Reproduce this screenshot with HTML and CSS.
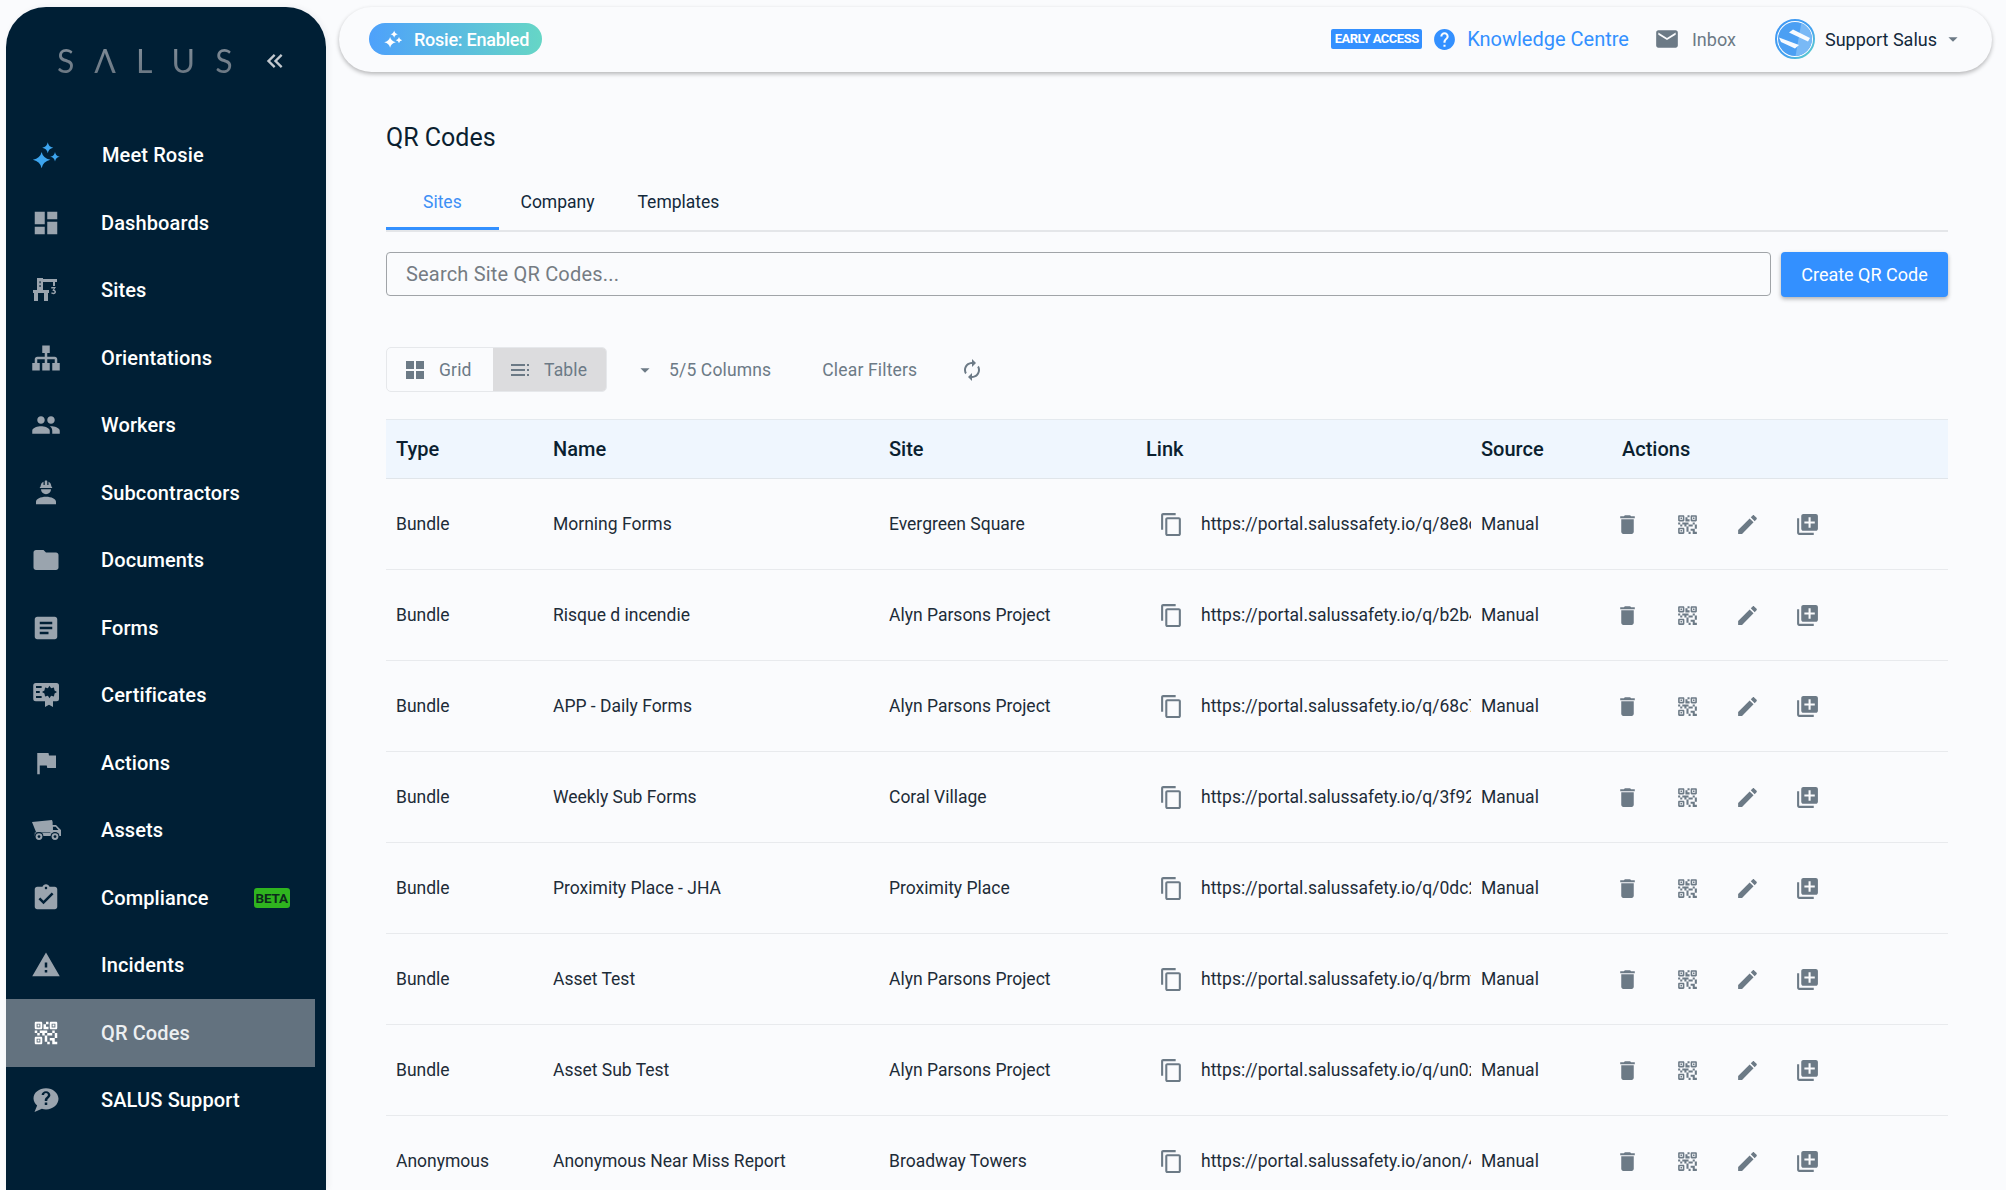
FILE: index.html
```html
<!DOCTYPE html>
<html lang="en">
<head>
    <meta charset="UTF-8">
    <meta name="viewport" content="width=device-width, initial-scale=1.0">
    <title>QR Codes</title>
    <link rel="stylesheet" href="styles.css">
</head>
<body>

    <!-- Icon sprite -->
    <svg class="sprite" xmlns="http://www.w3.org/2000/svg">
        <symbol id="i-spark" viewBox="0 0 24 24"><path d="M8.500 9.500q1 4.800 7 6.300-6 1.500-7 6.700-1-5.200-7-6.700 6-1.500 7-6.300zM13.400 1.800q.6 3.600 4.400 4.400-3.800.7-4.400 4.400-.6-3.700-4.400-4.400 3.800-.8 4.400-4.400zM19.200 9.600q.5 3.100 3.800 3.800-3.300.6-3.800 3.800-.5-3.200-3.800-3.800 3.300-.7 3.800-3.800z"/></symbol>
        <symbol id="i-dash" viewBox="0 0 24 24"><path d="M3 13h8V3H3v10zm0 8h8v-6H3v6zm10 0h8V11h-8v10zm0-18v6h8V3h-8z"/></symbol>
        <symbol id="i-crane" viewBox="0 0 24 24"><path fill-rule="evenodd" d="M4.800 2.400h4.800v.8h11.200v2.400h-1.600v3.200h-1.600V5.600h-8V12h4.800v2.400h-.8v6.400h-3.200v-6.400H5.600v6.400H2.400v-6.400h-.8V12h3.200V2.400zM6.800 5v1.500h.9V5h-.9zm0 3v1.500h.9V8h-.9z"/><path d="M16.200 9.600H20l-1.500 2.200c1 .3 1.500 1 1.500 1.800 0 1-.9 1.700-2 1.700-.9 0-1.600-.3-2-.9l.9-.7c.3.3.6.5 1.100.5.5 0 .8-.3.8-.6 0-.5-.5-.8-1.500-.8v-.8l1-1.300h-2.100z"/></symbol>
        <symbol id="i-sitemap" viewBox="0 0 24 24"><path d="M9 2v6h2v3H5c-1.110 0-2 .89-2 2v3H1v6h6v-6H5v-3h6v3H9v6h6v-6h-2v-3h6v3h-2v6h6v-6h-2v-3c0-1.110-.9-2-2-2h-6V8h2V2H9z"/></symbol>
        <symbol id="i-group" viewBox="0 0 24 24"><path d="M16 11c1.660 0 2.990-1.340 2.990-3S17.660 5 16 5c-1.660 0-3 1.340-3 3s1.340 3 3 3zm-8 0c1.660 0 2.990-1.340 2.990-3S9.660 5 8 5C6.340 5 5 6.340 5 8s1.340 3 3 3zm0 2c-2.330 0-7 1.170-7 3.500V19h14v-2.500c0-2.330-4.670-3.500-7-3.500zm8 0c-.29 0-.62.02-.97.05 1.160.84 1.970 1.970 1.970 3.450V19h6v-2.500c0-2.330-4.670-3.500-7-3.500z"/></symbol>
        <symbol id="i-hardhat" viewBox="0 0 24 24"><path d="M12 15c-4.420 0-8 1.790-8 4v2h16v-2c0-2.210-3.580-4-8-4M8 9a4 4 0 0 0 4 4 4 4 0 0 0 4-4M11.500 2c-.3 0-.5.21-.5.5v3h-1V3S7.750 3.860 7.750 6.750C7.750 6.750 7 6.890 7 8h10c-.05-1.110-.75-1.250-.75-1.250C16.250 3.860 14 3 14 3v2.500h-1v-3c0-.29-.19-.5-.5-.5h-1z"/></symbol>
        <symbol id="i-folder" viewBox="0 0 24 24"><path d="M10 4H4c-1.100 0-1.990.9-1.990 2L2 18c0 1.100.9 2 2 2h16c1.100 0 2-.9 2-2V8c0-1.100-.9-2-2-2h-8l-2-2z"/></symbol>
        <symbol id="i-article" viewBox="0 0 24 24"><path d="M19 3H5c-1.100 0-2 .9-2 2v14c0 1.100.9 2 2 2h14c1.100 0 2-.9 2-2V5c0-1.100-.9-2-2-2zm-5 14H7v-2h7v2zm3-4H7v-2h10v2zm0-4H7V7h10v2z"/></symbol>
        <symbol id="i-cert" viewBox="0 0 24 24"><path fill-rule="evenodd" d="M3.800 2.400h16.600a2 2 0 0 1 2 2V15a2 2 0 0 1-2 2h-2.800v4.600l-3.200-1.800-3.200 1.800V17H3.800a2 2 0 0 1-2-2V4.400a2 2 0 0 1 2-2zM14.800 4.600l1.260 1.950 2.280-.49.49 2.280 1.970 1.260-1.970 1.260-.49 2.280-2.280-.49-1.260 1.950-1.260-1.950-2.280.49-.49-2.280-1.970-1.260 1.970-1.260.49-2.280 2.280.49zM4 4.800v1.500h4.500V4.800H4zm0 4v1.500h3V8.800H4zm0 4v1.500h4.500v-1.500H4z"/></symbol>
        <symbol id="i-flag" viewBox="0 0 24 24"><path d="M14.400 6L14 4H5v17h2v-7h5.600l.4 2h7V6z"/></symbol>
        <symbol id="i-truck" viewBox="0 0 24 24">
            <path d="M.8 5.600L16.800 4l.5 1.600v8H4z"/>
            <path fill-rule="evenodd" d="M3 14h12.500V8H20l4 4v4.800H3V14zM17.500 9.300V12H22l-2.300-2.700h-2.200z"/>
            <circle cx="6.400" cy="17.200" r="3.600" fill="#001f35"/><circle cx="6.400" cy="17.200" r="2.700"/><circle cx="6.400" cy="17.200" r="1.100" fill="#001f35"/>
            <circle cx="19.200" cy="17.200" r="3.600" fill="#001f35"/><circle cx="19.200" cy="17.200" r="2.700"/><circle cx="19.200" cy="17.200" r="1.100" fill="#001f35"/>
        </symbol>
        <symbol id="i-comply" viewBox="0 0 24 24"><path d="M19 3h-4.180C14.400 1.840 13.300 1 12 1c-1.300 0-2.400.84-2.820 2H5c-1.100 0-2 .9-2 2v14c0 1.100.9 2 2 2h14c1.100 0 2-.9 2-2V5c0-1.100-.9-2-2-2zm-7 0c.55 0 1 .45 1 1s-.45 1-1 1-1-.45-1-1 .45-1 1-1zm-2 14l-4-4 1.410-1.410L10 14.170l6.590-6.590L18 9l-8 8z"/></symbol>
        <symbol id="i-warn" viewBox="0 0 24 24"><path d="M1 21h22L12 2 1 21zm12-3h-2v-2h2v2zm0-4h-2v-4h2v4z"/></symbol>
        <symbol id="i-qr" viewBox="0 0 24 24"><path d="M15 21h-2v-2h2v2zm-2-7h-2v5h2v-5zm8-2h-2v4h2v-4zm-2-2h-2v2h2v-2zM7 12H5v2h2v-2zm-2-2H3v2h2v-2zm7-5h2V3h-2v2zm-7.500-.5v3h3v-3h-3zM8 9H4c-.55 0-1-.45-1-1V4c0-.55.45-1 1-1h4c.55 0 1 .45 1 1v4c0 .55-.45 1-1 1zm-3.500 7.500v3h3v-3h-3zM8 21H4c-.55 0-1-.45-1-1v-4c0-.55.45-1 1-1h4c.55 0 1 .45 1 1v4c0 .55-.45 1-1 1zm8.500-16.500v3h3v-3h-3zM20 9h-4c-.55 0-1-.45-1-1V4c0-.55.45-1 1-1h4c.55 0 1 .45 1 1v4c0 .55-.45 1-1 1zm-1 10v-3h-4v2h2v3h4v-2h-2zm-2-7h-4v2h4v-2zm-4-2H7v2h2v2h2v-2h2v-2zm1-1V7h-2V5h-2v4h4zM6.750 5.250h-1.500v1.500h1.500v-1.500zm0 12h-1.500v1.500h1.500v-1.500zm12-12h-1.500v1.500h1.500v-1.500z"/></symbol>
        <symbol id="i-chat" viewBox="0 0 24 24"><path fill-rule="evenodd" d="M12 2.500C6.500 2.500 2 6 2 10.500c0 2.300 1.100 4.300 2.900 5.800L2.800 21.500l5.900-2.500c1 .3 2.200.5 3.300.5 5.500 0 10-3.900 10-8.500s-4.500-8.500-10-8.500zm1 13.500h-2v-2h2v2zm1.800-6.200l-.7.7c-.6.600-1.100 1-1.100 2.200h-2v-.4c0-.9.400-1.700 1-2.300l1-1c.3-.3.500-.7.500-1.100 0-.9-.7-1.500-1.500-1.500s-1.500.6-1.500 1.500H8.500C8.500 6.500 10 5 12 5s3.500 1.500 3.500 3.200c0 .6-.3 1.200-.7 1.600z"/></symbol>
        <symbol id="i-trash" viewBox="0 0 24 24"><path d="M6 19c0 1.100.9 2 2 2h8c1.100 0 2-.9 2-2V7H6v12zM19 4h-3.500l-1-1h-5l-1 1H5v2h14V4z"/></symbol>
        <symbol id="i-edit" viewBox="0 0 24 24"><path d="M3 17.250V21h3.750L17.810 9.940l-3.750-3.750L3 17.250zM20.710 7.040c.39-.39.39-1.020 0-1.410l-2.340-2.340c-.39-.39-1.020-.39-1.410 0l-1.830 1.830 3.750 3.750 1.830-1.830z"/></symbol>
        <symbol id="i-add" viewBox="0 0 24 24"><path d="M4 6H2v14c0 1.100.9 2 2 2h14v-2H4V6zm16-4H8c-1.100 0-2 .9-2 2v12c0 1.100.9 2 2 2h12c1.100 0 2-.9 2-2V4c0-1.100-.9-2-2-2zm-1 9h-4v4h-2v-4H9V9h4V5h2v4h4v2z"/></symbol>
        <symbol id="i-copy" viewBox="0 0 24 24"><path d="M16 1H4c-1.100 0-2 .9-2 2v14h2V3h12V1zm3 4H8c-1.100 0-2 .9-2 2v14c0 1.100.9 2 2 2h11c1.100 0 2-.9 2-2V7c0-1.100-.9-2-2-2zm0 16H8V7h11v14z"/></symbol>
        <symbol id="i-caret" viewBox="0 0 24 24"><path d="M7 10l5 5 5-5z"/></symbol>
    </svg>

    <div class="app">

        <!-- Sidebar -->
        <aside class="sidebar">
            <div class="brand">
                <span class="logo">SΛLUS</span>
                <svg class="collapse" viewBox="0 0 24 24"><path d="M18.410 7.410L17 6l-6 6 6 6 1.410-1.410L13.830 12zM12.410 7.410L11 6l-6 6 6 6 1.410-1.410L7.830 12z"/></svg>
            </div>
            <nav class="nav">
                <a class="nav-item rosie"><svg class="nav-icon"><use href="#i-spark"/></svg><span>Meet Rosie</span></a>
                <a class="nav-item"><svg class="nav-icon"><use href="#i-dash"/></svg><span>Dashboards</span></a>
                <a class="nav-item"><svg class="nav-icon"><use href="#i-crane"/></svg><span>Sites</span></a>
                <a class="nav-item"><svg class="nav-icon"><use href="#i-sitemap"/></svg><span>Orientations</span></a>
                <a class="nav-item"><svg class="nav-icon"><use href="#i-group"/></svg><span>Workers</span></a>
                <a class="nav-item"><svg class="nav-icon"><use href="#i-hardhat"/></svg><span>Subcontractors</span></a>
                <a class="nav-item"><svg class="nav-icon"><use href="#i-folder"/></svg><span>Documents</span></a>
                <a class="nav-item"><svg class="nav-icon"><use href="#i-article"/></svg><span>Forms</span></a>
                <a class="nav-item"><svg class="nav-icon"><use href="#i-cert"/></svg><span>Certificates</span></a>
                <a class="nav-item"><svg class="nav-icon"><use href="#i-flag"/></svg><span>Actions</span></a>
                <a class="nav-item"><svg class="nav-icon"><use href="#i-truck"/></svg><span>Assets</span></a>
                <a class="nav-item"><svg class="nav-icon"><use href="#i-comply"/></svg><span>Compliance</span><b class="beta">BETA</b></a>
                <a class="nav-item"><svg class="nav-icon"><use href="#i-warn"/></svg><span>Incidents</span></a>
                <a class="nav-item active"><svg class="nav-icon"><use href="#i-qr"/></svg><span>QR Codes</span></a>
                <a class="nav-item"><svg class="nav-icon"><use href="#i-chat"/></svg><span>SALUS Support</span></a>
            </nav>
        </aside>

        <div class="main">

            <!-- Top bar -->
            <header class="topbar">
                <div class="rosie-pill"><svg class="pill-icon"><use href="#i-spark"/></svg>Rosie: Enabled</div>
                <div class="top-right">
                    <span class="early">EARLY ACCESS</span>
                    <svg class="help" viewBox="0 0 24 24"><path d="M12 2C6.480 2 2 6.480 2 12s4.480 10 10 10 10-4.480 10-10S17.520 2 12 2zm1 17h-2v-2h2v2zm2.070-7.750l-.9.92C13.450 12.900 13 13.500 13 15h-2v-.5c0-1.100.45-2.100 1.170-2.830l1.240-1.260c.37-.36.59-.86.59-1.410 0-1.100-.9-2-2-2s-2 .9-2 2H8c0-2.210 1.790-4 4-4s4 1.790 4 4c0 .88-.36 1.680-.93 2.250z"/></svg>
                    <a class="knowledge">Knowledge Centre</a>
                    <svg class="mail" viewBox="0 0 24 24"><path d="M20 4H4c-1.100 0-1.990.9-1.990 2L2 18c0 1.100.9 2 2 2h16c1.100 0 2-.9 2-2V6c0-1.100-.9-2-2-2zm0 4l-8 5-8-5V6l8 5 8-5v2z"/></svg>
                    <a class="inbox">Inbox</a>
                    <svg class="avatar" viewBox="0 0 40 40">
                        <defs>
                            <linearGradient id="ring" x1="0" y1="0" x2="1" y2="1"><stop offset="0" stop-color="#3f97f5"/><stop offset=".6" stop-color="#45a2ee"/><stop offset="1" stop-color="#5fd6c4"/></linearGradient>
                            <clipPath id="disc"><circle cx="20" cy="20" r="17"/></clipPath>
                        </defs>
                        <circle cx="20" cy="20" r="19" fill="#fff" stroke="url(#ring)" stroke-width="2"/>
                        <circle cx="20" cy="20" r="17" fill="#4b9ff3"/>
                        <path clip-path="url(#disc)" d="M27 0h14v40H20z" fill="#79b9f6"/>
                        <path d="M14 13.500L18 10.500 35 19 33 22.500zM4 18.500L24 26 20 29.500 6 23z" fill="#fff" opacity=".95"/>
                    </svg>
                    <span class="user">Support Salus</span>
                    <svg class="user-caret"><use href="#i-caret"/></svg>
                </div>
            </header>

            <main class="content">
                <h1 class="title">QR Codes</h1>

                <div class="tabs">
                    <a class="tab selected">Sites</a>
                    <a class="tab">Company</a>
                    <a class="tab">Templates</a>
                </div>

                <div class="search-row">
                    <input class="search" type="text" placeholder="Search Site QR Codes...">
                    <button class="create">Create QR Code</button>
                </div>

                <div class="toolbar">
                    <div class="toggle">
                        <span class="toggle-btn">
                            <svg class="tool-icon" viewBox="0 0 24 24"><path d="M3 3h8v8H3zM13 3h8v8h-8zM3 13h8v8H3zM13 13h8v8h-8z"/></svg>Grid
                        </span>
                        <span class="toggle-btn on">
                            <svg class="tool-icon" viewBox="0 0 24 24"><path d="M3 6h14v2H3zM3 11h14v2H3zM3 16h14v2H3zM19 6h2v2h-2zM19 11h2v2h-2zM19 16h2v2h-2z"/></svg>Table
                        </span>
                    </div>
                    <svg class="tool-caret"><use href="#i-caret"/></svg>
                    <span class="columns">5/5 Columns</span>
                    <span class="clear">Clear Filters</span>
                    <svg class="refresh" viewBox="0 0 24 24"><path d="M12 6v3l4-4-4-4v3c-4.420 0-8 3.580-8 8 0 1.570.46 3.030 1.240 4.260L6.700 14.800c-.45-.83-.7-1.790-.7-2.800 0-3.310 2.690-6 6-6zm6.760 1.740L17.300 9.200c.44.84.7 1.790.7 2.800 0 3.310-2.690 6-6 6v-3l-4 4 4 4v-3c4.420 0 8-3.580 8-8 0-1.570-.46-3.030-1.240-4.260z"/></svg>
                </div>

                <table class="qr-table">
                    <thead>
                        <tr>
                            <th class="c-type">Type</th>
                            <th class="c-name">Name</th>
                            <th class="c-site">Site</th>
                            <th class="c-link">Link</th>
                            <th class="c-source">Source</th>
                            <th class="c-actions">Actions</th>
                        </tr>
                    </thead>
                    <tbody>
                        <tr>
                            <td>Bundle</td><td>Morning Forms</td><td>Evergreen Square</td>
                            <td><div class="link"><svg class="copy"><use href="#i-copy"/></svg><span class="url">https://portal.salussafety.io/q/8e8c</span></div></td>
                            <td>Manual</td>
                            <td><div class="actions"><svg><use href="#i-trash"/></svg><svg><use href="#i-qr"/></svg><svg><use href="#i-edit"/></svg><svg><use href="#i-add"/></svg></div></td>
                        </tr>
                        <tr>
                            <td>Bundle</td><td>Risque d incendie</td><td>Alyn Parsons Project</td>
                            <td><div class="link"><svg class="copy"><use href="#i-copy"/></svg><span class="url">https://portal.salussafety.io/q/b2b4</span></div></td>
                            <td>Manual</td>
                            <td><div class="actions"><svg><use href="#i-trash"/></svg><svg><use href="#i-qr"/></svg><svg><use href="#i-edit"/></svg><svg><use href="#i-add"/></svg></div></td>
                        </tr>
                        <tr>
                            <td>Bundle</td><td>APP - Daily Forms</td><td>Alyn Parsons Project</td>
                            <td><div class="link"><svg class="copy"><use href="#i-copy"/></svg><span class="url">https://portal.salussafety.io/q/68c7</span></div></td>
                            <td>Manual</td>
                            <td><div class="actions"><svg><use href="#i-trash"/></svg><svg><use href="#i-qr"/></svg><svg><use href="#i-edit"/></svg><svg><use href="#i-add"/></svg></div></td>
                        </tr>
                        <tr>
                            <td>Bundle</td><td>Weekly Sub Forms</td><td>Coral Village</td>
                            <td><div class="link"><svg class="copy"><use href="#i-copy"/></svg><span class="url">https://portal.salussafety.io/q/3f92</span></div></td>
                            <td>Manual</td>
                            <td><div class="actions"><svg><use href="#i-trash"/></svg><svg><use href="#i-qr"/></svg><svg><use href="#i-edit"/></svg><svg><use href="#i-add"/></svg></div></td>
                        </tr>
                        <tr>
                            <td>Bundle</td><td>Proximity Place - JHA</td><td>Proximity Place</td>
                            <td><div class="link"><svg class="copy"><use href="#i-copy"/></svg><span class="url">https://portal.salussafety.io/q/0dc2</span></div></td>
                            <td>Manual</td>
                            <td><div class="actions"><svg><use href="#i-trash"/></svg><svg><use href="#i-qr"/></svg><svg><use href="#i-edit"/></svg><svg><use href="#i-add"/></svg></div></td>
                        </tr>
                        <tr>
                            <td>Bundle</td><td>Asset Test</td><td>Alyn Parsons Project</td>
                            <td><div class="link"><svg class="copy"><use href="#i-copy"/></svg><span class="url">https://portal.salussafety.io/q/brmt</span></div></td>
                            <td>Manual</td>
                            <td><div class="actions"><svg><use href="#i-trash"/></svg><svg><use href="#i-qr"/></svg><svg><use href="#i-edit"/></svg><svg><use href="#i-add"/></svg></div></td>
                        </tr>
                        <tr>
                            <td>Bundle</td><td>Asset Sub Test</td><td>Alyn Parsons Project</td>
                            <td><div class="link"><svg class="copy"><use href="#i-copy"/></svg><span class="url">https://portal.salussafety.io/q/un0z</span></div></td>
                            <td>Manual</td>
                            <td><div class="actions"><svg><use href="#i-trash"/></svg><svg><use href="#i-qr"/></svg><svg><use href="#i-edit"/></svg><svg><use href="#i-add"/></svg></div></td>
                        </tr>
                        <tr>
                            <td>Anonymous</td><td>Anonymous Near Miss Report</td><td>Broadway Towers</td>
                            <td><div class="link"><svg class="copy"><use href="#i-copy"/></svg><span class="url">https://portal.salussafety.io/anon/4</span></div></td>
                            <td>Manual</td>
                            <td><div class="actions"><svg><use href="#i-trash"/></svg><svg><use href="#i-qr"/></svg><svg><use href="#i-edit"/></svg><svg><use href="#i-add"/></svg></div></td>
                        </tr>
                    </tbody>
                </table>
            </main>
        </div>
    </div>

</body>
</html>
```

FILE: styles.css
```css
body {
    margin: 0;
    height: 100vh;
    overflow: hidden;
    background: #fafbfd;
    color: #0b1f30;
    font-family: Roboto, Arial, sans-serif;
}

.sprite {
    display: none;
}

.app {
    display: flex;
    height: 100vh;
}

/* Sidebar */
.sidebar {
    flex: 0 0 320px;
    margin: 7px 13px 0 6px;
    background: #001f35;
    border-radius: 40px 40px 0 0;
    box-shadow: 2px 0 6px rgba(0, 30, 60, 0.06);
}

.brand {
    display: flex;
    align-items: center;
    height: 114.5px;
    box-sizing: border-box;
    padding: 0 0 7px 51px;
}

.logo {
    width: 204px;
    font-family: Lato, sans-serif;
    font-weight: 400;
    font-size: 32px;
    letter-spacing: 20px;
    background: linear-gradient(#84909b, #66737f);
    -webkit-background-clip: text;
    background-clip: text;
    color: transparent;
}

.collapse {
    width: 28px;
    height: 28px;
    fill: #c3c9cf;
}

.nav {
    width: 309px;
}

.nav-item {
    display: flex;
    align-items: center;
    height: 67.5px;
    padding-left: 25px;
    color: #fff;
    font-size: 20px;
    font-weight: 500;
    letter-spacing: 0.12px;
}

.nav-icon {
    flex: 0 0 30px;
    width: 30px;
    height: 30px;
    margin-right: 40px;
    fill: #9aa4ae;
}

.rosie .nav-icon {
    fill: #3da5ee;
}

.rosie span {
    margin-left: 1px;
}

.active {
    background: #63727f;
    color: #eceff1;
}

.active .nav-icon {
    fill: #fff;
}

.beta {
    margin-left: 45px;
    padding: 1px 2px;
    background: #2fb41f;
    border-radius: 3px;
    color: #0c2a1c;
    font-size: 13.5px;
    font-weight: 700;
    line-height: 18px;
    letter-spacing: -0.2px;
}

/* Top bar */
.main {
    flex: 1;
    min-width: 0;
}

.topbar {
    display: flex;
    align-items: center;
    justify-content: space-between;
    width: 1653px;
    height: 65px;
    margin-top: 7px;
    padding: 0 28px 1px 30px;
    box-sizing: border-box;
    background: #fafbfd;
    border-radius: 33px;
    box-shadow: 0 2px 4px rgba(0, 0, 0, 0.28);
}

.rosie-pill {
    display: flex;
    align-items: center;
    height: 32px;
    padding: 0 13px 0 14px;
    border-radius: 16px;
    background: linear-gradient(90deg, #4ea1fb, #66d6c6);
    color: #fff;
    font-size: 18px;
    font-weight: 500;
    letter-spacing: -0.25px;
}

.pill-icon {
    width: 20px;
    height: 20px;
    margin-right: 11px;
    fill: #fff;
}

.top-right {
    display: flex;
    align-items: center;
}

.early {
    width: 91px;
    height: 20px;
    background: #3390ff;
    border-radius: 2px;
    color: #fff;
    font-size: 13px;
    font-weight: 700;
    line-height: 20px;
    text-align: center;
    letter-spacing: -0.5px;
    white-space: nowrap;
}

.help {
    width: 25px;
    height: 25px;
    margin: 0 10px;
    fill: #3390ff;
}

.knowledge {
    color: #3390ff;
    font-size: 20px;
}

.mail {
    width: 26px;
    height: 26px;
    margin: 0 12px 0 25px;
    fill: #6c7a86;
}

.inbox {
    color: #6c7a86;
    font-size: 18px;
}

.avatar {
    width: 40px;
    height: 40px;
    margin: 0 10px 0 39px;
}

.user {
    font-size: 18px;
    color: #12293b;
}

.user-caret {
    width: 22px;
    height: 22px;
    margin-left: 5px;
    fill: #6c7a86;
}

/* Content */
.content {
    width: 1562px;
    margin-left: 47px;
}

.title {
    margin: 49px 0 0;
    font-size: 25px;
    font-weight: 400;
    line-height: 34px;
    color: #0b1f30;
}

.tabs {
    display: flex;
    height: 60px;
    margin-top: 15px;
    border-bottom: 2px solid #e4e6e9;
}

.tab {
    padding: 0 21.5px;
    font-size: 17.5px;
    line-height: 64px;
    color: #12293b;
}

.selected {
    width: 39px;
    height: 57px;
    padding: 0 37px;
    color: #3d8ff5;
    border-bottom: 3px solid #3390ff;
}

.search-row {
    display: flex;
    gap: 10px;
    margin-top: 20px;
}

.search {
    flex: 1;
    height: 44px;
    padding: 0 19px;
    box-sizing: border-box;
    border: 1px solid #a0a4a8;
    border-radius: 4px;
    background: transparent;
    color: #12293b;
    font-family: inherit;
    font-size: 20px;
    letter-spacing: 0.19px;
}

.search::placeholder {
    color: #757c83;
    opacity: 1;
}

.create {
    width: 167px;
    height: 45px;
    border: none;
    border-radius: 4px;
    background: #3390ff;
    box-shadow: 0 2px 4px rgba(0, 0, 0, 0.3);
    color: #fff;
    font-family: inherit;
    font-size: 18px;
}

.toolbar {
    display: flex;
    align-items: center;
    height: 45px;
    margin-top: 50px;
    color: #6c7a86;
    font-size: 17.5px;
    letter-spacing: 0.16px;
}

.toggle {
    display: flex;
    height: 45px;
    box-sizing: border-box;
    border: 1px solid #e6e8eb;
    border-radius: 5px;
    overflow: hidden;
}

.toggle-btn {
    display: flex;
    align-items: center;
    width: 106px;
    padding-left: 16px;
    box-sizing: border-box;
}

.on {
    width: 113px;
    padding-left: 15px;
    background: #dcdcde;
}

.tool-icon {
    width: 24px;
    height: 24px;
    margin-right: 12px;
    fill: #6c7a86;
}

.tool-caret {
    width: 22px;
    height: 22px;
    margin-left: 27px;
    fill: #6c7a86;
}

.columns {
    margin-left: 13px;
}

.clear {
    margin-left: 51px;
}

.refresh {
    width: 24px;
    height: 26px;
    margin-left: 43px;
    fill: #6c7a86;
}

/* Table */
.qr-table {
    width: 100%;
    margin-top: 27px;
    table-layout: fixed;
    border-collapse: collapse;
    font-size: 17.5px;
}

.qr-table th {
    height: 58px;
    padding: 0 0 0 10px;
    background: #eff6fe;
    border-top: 1px solid #e4e9ee;
    border-bottom: 1px solid #e0e5ea;
    font-size: 20px;
    font-weight: 500;
    text-align: left;
}

.qr-table td {
    height: 90px;
    padding: 0 0 0 10px;
    border-bottom: 1px solid #e8eaed;
    white-space: nowrap;
    overflow: hidden;
    color: #1d2c38;
}

.c-type { width: 147px; }
.c-name { width: 326px; }
.c-site { width: 247px; }
.c-link { width: 325px; }
.c-source { width: 131px; }

.link {
    display: flex;
    align-items: center;
    padding-left: 13px;
}

.copy {
    flex: 0 0 25px;
    width: 25px;
    height: 25px;
    margin: 1px 17px 0 0;
    fill: #6c7a86;
}

.url {
    width: 272px;
    overflow: hidden;
}

.actions {
    display: flex;
    gap: 35px;
    margin-left: -7px;
}

.actions svg {
    width: 25px;
    height: 25px;
    margin-top: 1px;
    fill: #6c7a86;
}
```
